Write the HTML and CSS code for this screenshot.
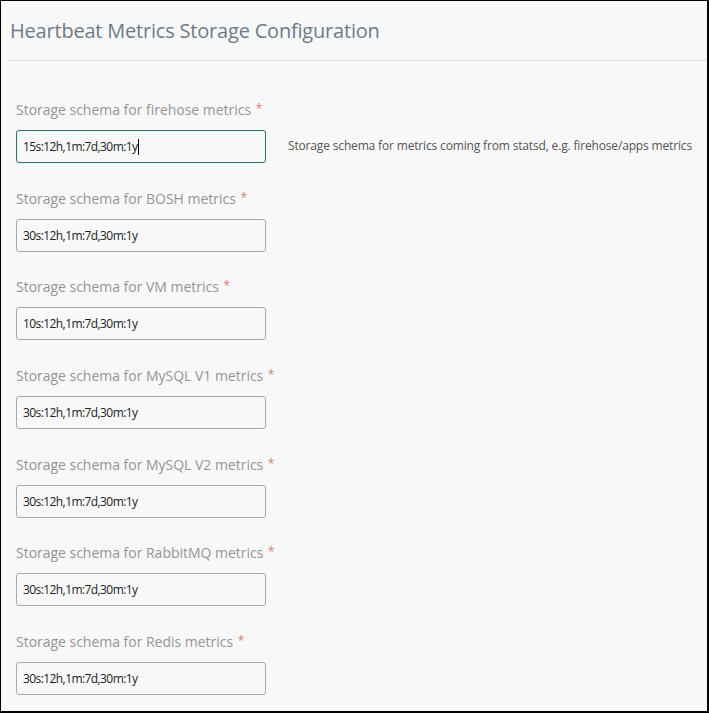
FILE: index.html
```html
<!DOCTYPE html>
<html>
<head>
<meta charset="utf-8">
<link rel="stylesheet" href="styles.css">
</head>
<body>
<div class="frame">
  <div class="header">
    <h1 class="title">Heartbeat Metrics Storage Configuration</h1>
  </div>
  <form class="form">
    <div class="field">
      <label class="label">Storage schema for firehose metrics <span class="req">*</span></label>
      <div class="row">
        <div class="input focused">15s:12h,1m:7d,30m:1y<span class="caret"></span></div>
        <div class="hint">Storage schema for metrics coming from statsd, e.g. firehose/apps metrics</div>
      </div>
    </div>
    <div class="field">
      <label class="label">Storage schema for BOSH metrics <span class="req">*</span></label>
      <div class="row"><div class="input">30s:12h,1m:7d,30m:1y</div></div>
    </div>
    <div class="field">
      <label class="label">Storage schema for VM metrics <span class="req">*</span></label>
      <div class="row"><div class="input">10s:12h,1m:7d,30m:1y</div></div>
    </div>
    <div class="field">
      <label class="label">Storage schema for MySQL V1 metrics <span class="req">*</span></label>
      <div class="row"><div class="input">30s:12h,1m:7d,30m:1y</div></div>
    </div>
    <div class="field">
      <label class="label">Storage schema for MySQL V2 metrics <span class="req">*</span></label>
      <div class="row"><div class="input">30s:12h,1m:7d,30m:1y</div></div>
    </div>
    <div class="field">
      <label class="label">Storage schema for RabbitMQ metrics <span class="req">*</span></label>
      <div class="row"><div class="input">30s:12h,1m:7d,30m:1y</div></div>
    </div>
    <div class="field">
      <label class="label">Storage schema for Redis metrics <span class="req">*</span></label>
      <div class="row"><div class="input">30s:12h,1m:7d,30m:1y</div></div>
    </div>
  </form>
</div>
</body>
</html>
```
FILE: styles.css
```css
html, body {
  margin: 0;
  padding: 0;
  background: #f8f8f8;
}
.frame {
  box-sizing: border-box;
  width: 709px;
  height: 713px;
  border-style: solid;
  border-color: #000;
  border-width: 1px 2px 2px 1px;
  background: #f8f8f8;
  overflow: hidden;
  font-family: "Open Sans", "Noto Sans", sans-serif;
}
.header {
  margin-left: 8px;
  border-bottom: 1px solid #e2e2e2;
  height: 60px;
  box-sizing: border-box;
  padding-left: 1px;
}
.title {
  margin: 0;
  padding-top: 15px;
  font-size: 20px;
  font-weight: 400;
  line-height: 30px;
  color: #6e7b87;
  letter-spacing: -0.2px;
}
.form {
  margin: 0;
  padding: 39px 0 0 15px;
  display: flex;
  flex-direction: column;
  gap: 25.67px;
}
.field {
  display: flex;
  flex-direction: column;
  gap: 10px;
}
.label {
  display: block;
  height: 20px;
  font-size: 14px;
  line-height: 20px;
  color: #959595;
  letter-spacing: -0.02px;
}
.req {
  color: #e2786c;
  font-size: 12px;
  line-height: 0;
  vertical-align: 2px;
  margin-left: 1px;
}
.row {
  display: flex;
  align-items: center;
  gap: 22px;
}
.input {
  box-sizing: border-box;
  width: 250px;
  height: 33px;
  border: 1px solid #a9a9a9;
  border-radius: 3px;
  background: #f8f8f8;
  padding: 0 6px;
  display: flex;
  align-items: center;
  font-size: 12px;
  color: #222;
  letter-spacing: -0.58px;
}
.input.focused {
  border-color: #1d7a6c;
}
.caret {
  display: inline-block;
  width: 1px;
  height: 16px;
  background: #000;
  margin-left: 1px;
}
.hint {
  font-size: 12px;
  color: #555;
  letter-spacing: -0.16px;
  padding-bottom: 3px;
}
```
